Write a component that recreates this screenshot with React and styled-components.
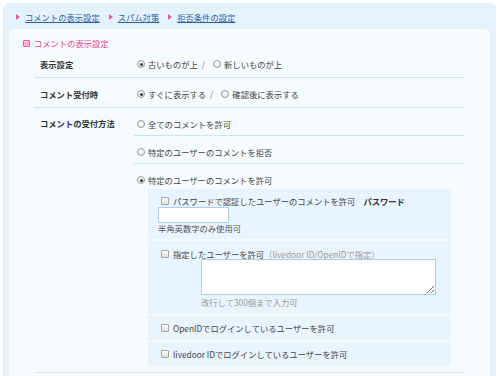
import React from "react";
import styled, { createGlobalStyle } from "styled-components";

const Global = createGlobalStyle`
  html, body { margin: 0; padding: 0; background: #ffffff; overflow: hidden; }
  body {
    font-family: "Noto Sans CJK JP", "Noto Sans", sans-serif;
    font-size: 8.3px;
    line-height: 10px;
    color: #444;
  }
`;

const Outer = styled.div`
  margin: 3px 4px 0 3px;
  background: #e3f2fd;
  border-radius: 6px 6px 0 0;
  padding: 9px 6px 0 6px;
  height: 373px;
  box-sizing: border-box;
  display: flex;
  flex-direction: column;
`;

const Crumbs = styled.nav`
  display: flex;
  align-items: center;
  padding-left: 7px;
  height: 10px;
  margin-bottom: 7px;
  flex: none;
`;

const Crumb = styled.a`
  display: flex;
  align-items: center;
  margin-right: 9px;
  color: #2f5f9e;
  text-decoration: underline;
  cursor: pointer;
  &::before {
    content: "";
    width: 0;
    height: 0;
    border-top: 3px solid transparent;
    border-bottom: 3px solid transparent;
    border-left: 4px solid #ea5d98;
    margin-right: 5px;
  }
`;

const Panel = styled.div`
  background: #f5fbff;
  border-radius: 5px 5px 0 0;
  padding-top: 9px;
  flex: 1;
  min-height: 0;
  overflow: hidden;
`;

const Heading = styled.h2`
  display: flex;
  align-items: center;
  margin: 0;
  padding-left: 14px;
  font-size: 8.3px;
  font-weight: normal;
  line-height: 10px;
  color: #e5478a;
`;

const HeadIcon = styled.span`
  width: 5px;
  height: 5px;
  border: 1px solid #ea5d98;
  background: #f7b7d2;
  border-radius: 1px;
  margin-right: 4px;
`;

const Table = styled.div`
  margin: 0 25px;
`;

const Row = styled.div`
  display: flex;
  border-bottom: 1px solid ${(p) => (p.$last ? "#dde6ec" : "#cfe3ef")};
  padding: ${(p) => (p.$multi ? "0" : "11px 0 8px")};
`;

const Label = styled.div`
  width: 100px;
  flex: none;
  padding-left: 6px;
  box-sizing: border-box;
  font-weight: bold;
  color: #333;
  padding-top: ${(p) => (p.$multi ? "10px" : "0")};
`;

const Value = styled.div`
  flex: 1;
  display: flex;
  align-items: center;
  padding-left: 3px;
  color: #444;
`;

const Options = styled.div`
  flex: 1;
  padding-bottom: 6px;
`;

const Option = styled.div`
  padding: 11px 0 ${(p) => (p.$last ? "0" : "6px")} 3px;
  border-bottom: ${(p) => (p.$last ? "none" : "1px solid #cfe3ef")};
`;

const Line = styled.div`
  display: flex;
  align-items: center;
  height: 10px;
`;

const Radio = styled.span`
  width: 6px;
  height: 6px;
  border-radius: 50%;
  border: 1px solid #9a9a9a;
  background: radial-gradient(circle at 50% 40%, #ffffff 0%, #e2e2e2 100%);
  margin-right: 3px;
  display: inline-flex;
  align-items: center;
  justify-content: center;
  flex: none;
  &::after {
    content: "";
    width: 3px;
    height: 3px;
    border-radius: 50%;
    background: ${(p) => (p.$checked ? "#3a3a3a" : "transparent")};
  }
`;

const Slash = styled.span`
  color: #777;
  margin: 0 8px 0 4px;
`;

const SubList = styled.div`
  display: flex;
  flex-direction: column;
  gap: 2px;
  margin: 4px 14px 0 11px;
`;

const SubBox = styled.div`
  background: #e8f5fe;
  padding: ${(p) => p.$pad || "7px 10px 7px 10px"};
`;

const Check = styled.span`
  width: 6px;
  height: 6px;
  border: 1px solid #a5a5a5;
  border-radius: 1px;
  background: linear-gradient(#ffffff, #dcdcdc);
  margin: 0 4px 0 3px;
  flex: none;
`;

const Strong = styled.b`
  color: #333;
  margin-left: 8px;
`;

const Muted = styled.span`
  color: #999;
`;

const TextInput = styled.input`
  display: block;
  width: 71px;
  height: 16px;
  box-sizing: border-box;
  margin: 1px 0 0 0;
  border: 1px solid #a9cfe6;
  background: #fff;
  padding: 0;
`;

const Note = styled.div`
  color: ${(p) => (p.$muted ? "#999" : "#555")};
  margin-left: ${(p) => p.$indent || "0"};
  margin-top: ${(p) => p.$mt || "0"};
`;

const Area = styled.textarea`
  display: block;
  width: 235px;
  height: 36px;
  box-sizing: border-box;
  margin-left: 43px;
  border: 1px solid #a9cfe6;
  background: #fff;
  padding: 0;
  resize: both;
`;

export default function App() {
  return (
    <>
      <Global />
      <Outer>
        <Crumbs>
          <Crumb>コメントの表示設定</Crumb>
          <Crumb>スパム対策</Crumb>
          <Crumb>拒否条件の設定</Crumb>
        </Crumbs>
        <Panel>
          <Heading>
            <HeadIcon />
            コメントの表示設定
          </Heading>
          <Table>
            <Row>
              <Label>表示設定</Label>
              <Value>
                <Radio $checked />古いものが上<Slash>/</Slash>
                <Radio />新しいものが上
              </Value>
            </Row>
            <Row>
              <Label>コメント受付時</Label>
              <Value>
                <Radio $checked />すぐに表示する<Slash>/</Slash>
                <Radio />確認後に表示する
              </Value>
            </Row>
            <Row $multi $last>
              <Label $multi>コメントの受付方法</Label>
              <Options>
                <Option>
                  <Line><Radio />全てのコメントを許可</Line>
                </Option>
                <Option>
                  <Line><Radio />特定のユーザーのコメントを拒否</Line>
                </Option>
                <Option $last>
                  <Line><Radio $checked />特定のユーザーのコメントを許可</Line>
                  <SubList>
                    <SubBox $pad="7px 10px 6px 10px">
                      <Line>
                        <Check />パスワードで認証したユーザーのコメントを許可
                        <Strong>パスワード</Strong>
                      </Line>
                      <TextInput type="text" />
                      <Note>半角英数字のみ使用可</Note>
                    </SubBox>
                    <SubBox $pad="8px 10px 7px 10px">
                      <Line>
                        <Check />指定したユーザーを許可
                        <Muted>（livedoor ID/OpenIDで指定）</Muted>
                      </Line>
                      <Area />
                      <Note $muted $indent="43px" $mt="2px">改行して300個まで入力可</Note>
                    </SubBox>
                    <SubBox>
                      <Line><Check />OpenIDでログインしているユーザーを許可</Line>
                    </SubBox>
                    <SubBox>
                      <Line><Check />livedoor IDでログインしているユーザーを許可</Line>
                    </SubBox>
                  </SubList>
                </Option>
              </Options>
            </Row>
          </Table>
        </Panel>
      </Outer>
    </>
  );
}
